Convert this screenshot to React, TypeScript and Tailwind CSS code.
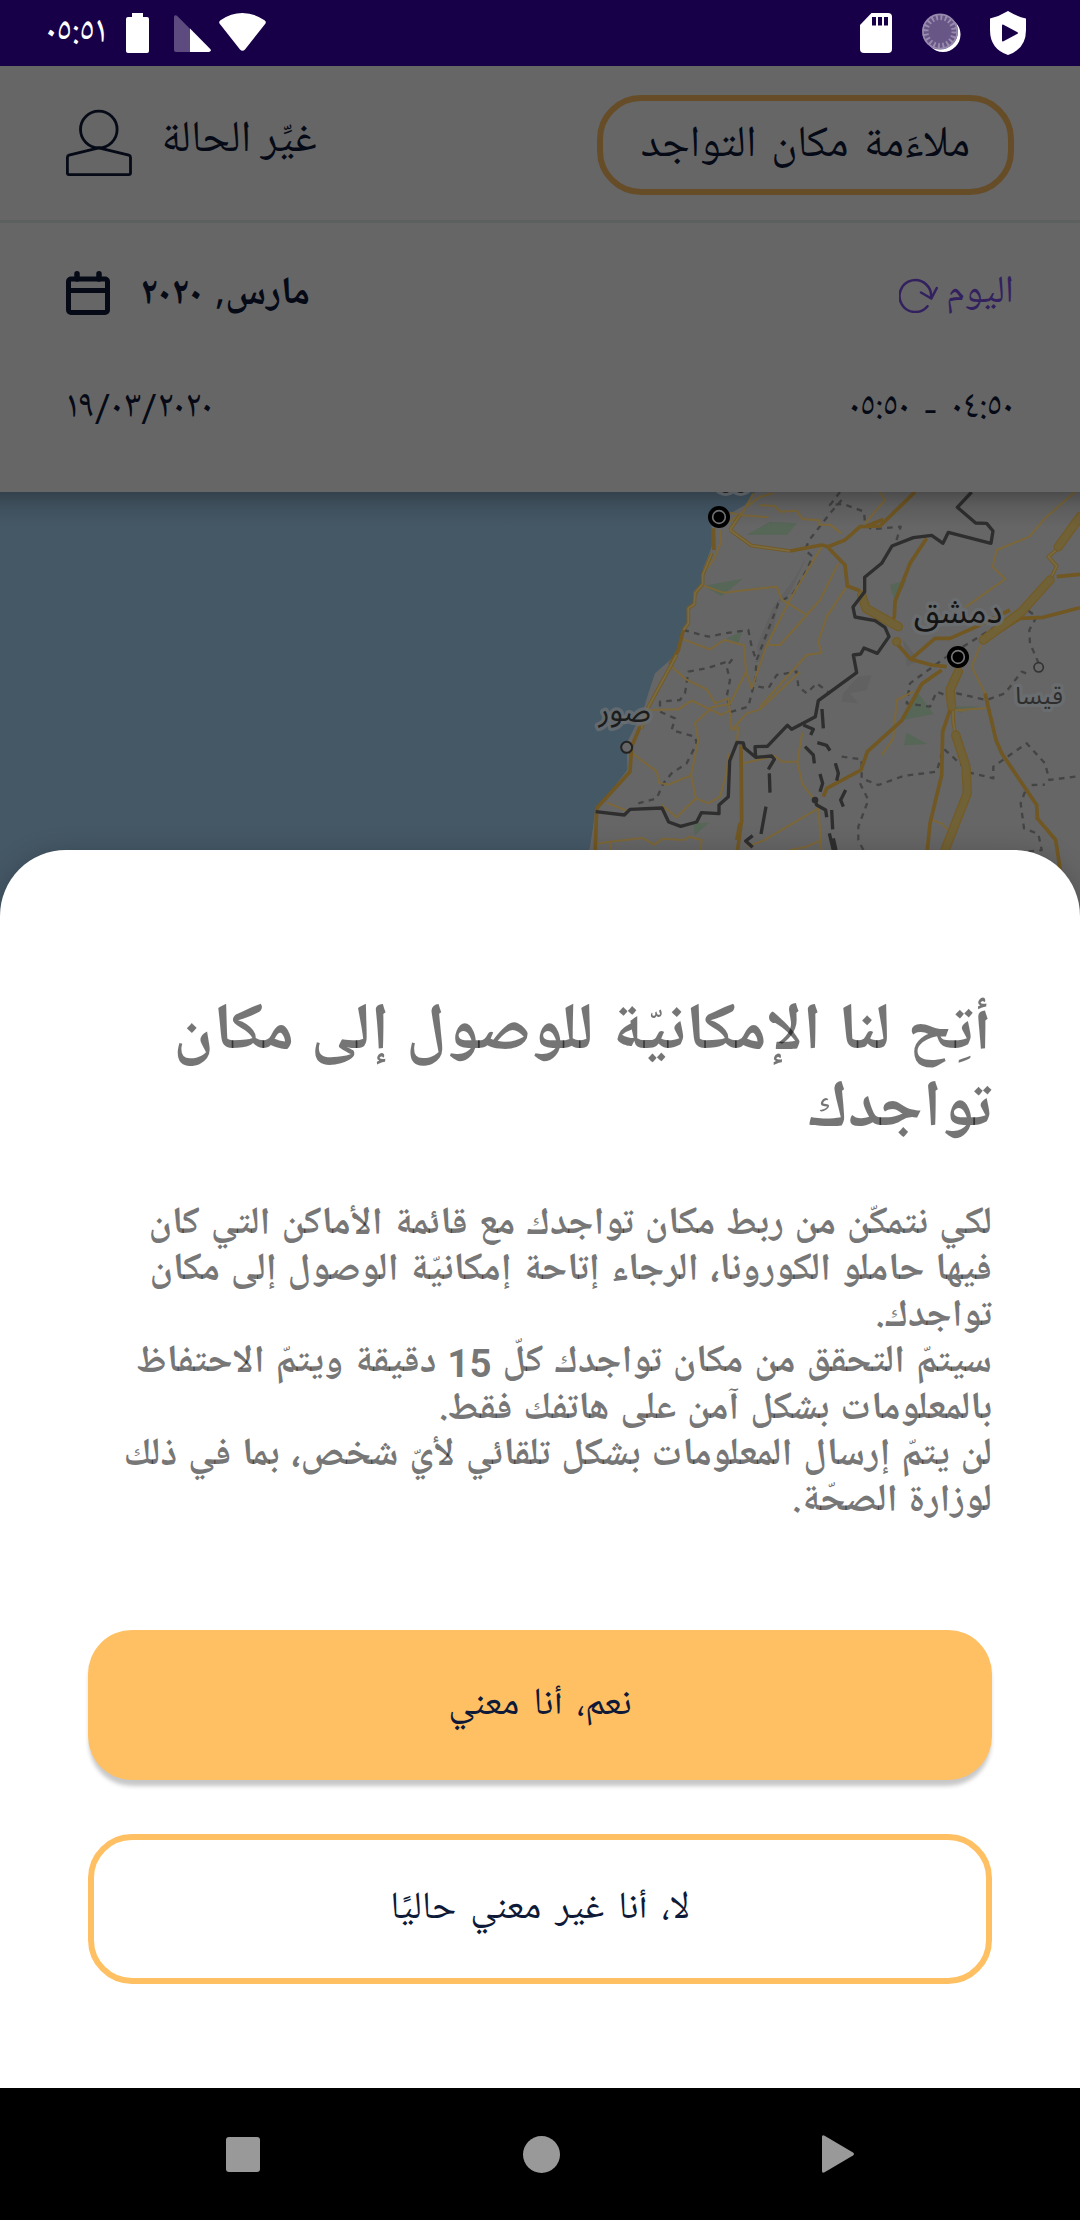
import React from "react";

const NASKH = "font-['Noto_Naskh_Arabic_UI','Noto_Naskh_Arabic',Roboto,serif]";

function StatusBar() {
  return (
    <div className="flex h-[66px] items-start bg-[#180049] text-white" dir="ltr">
      <span className="ml-[45px] w-[81px] whitespace-nowrap text-[38.5px] leading-[64px]">٠٥:٥١</span>
      <svg className="mt-[13px] h-[40px] w-[23px]" viewBox="0 0 23 40" fill="#fff">
        <path d="M6 0h11v4h4a2 2 0 0 1 2 2v32a2 2 0 0 1-2 2H2a2 2 0 0 1-2-2V6a2 2 0 0 1 2-2h4z" />
      </svg>
      <svg className="ml-[25px] mt-[15px] h-[37px] w-[37px]" viewBox="0 0 37 37">
        <path d="M0 1.5Q1-.5 3 .8L16.200 14V37H2a2 2 0 0 1-2-2z" fill="#5d4b80" />
        <path d="M16 13.500 36.500 34.200Q37.500 36.500 35 37H16z" fill="#fff" />
      </svg>
      <svg className="ml-[8px] mt-[13px] h-[38px] w-[47px]" viewBox="0 0 47 38" fill="#fff">
        <path d="M.5 10.500Q-.5 8.500 1.500 7.200Q12 0 23.500 0T45.500 7.200Q47.500 8.500 46.500 10.500L26 36.500Q23.500 39 21 36.500z" />
      </svg>
      <span className="grow" />
      <svg className="mt-[13px] h-[40px] w-[32px]" viewBox="0 0 32 40">
        <path d="M11.500 0H28a4 4 0 0 1 4 4v32a4 4 0 0 1-4 4H4a4 4 0 0 1-4-4V12z" fill="#fff" />
        <path d="M12 4h4v8.500h-4zM18 4h4v8.500h-4zM24 4h4v8.500h-4z" fill="#180049" />
      </svg>
      <svg className="ml-[30px] mt-[13px] h-[40px] w-[40px]" viewBox="0 0 40 40">
        <circle cx="21" cy="21.500" r="17.500" fill="#fff" />
        <circle cx="18" cy="18.500" r="18" fill="#685687" />
        <circle cx="18" cy="18.500" r="14.500" fill="none" stroke="#988bad" strokeWidth="6" strokeDasharray="2 2.555" />
        <circle cx="18" cy="18.500" r="17" fill="none" stroke="#988bad" strokeWidth="1.500" />
      </svg>
      <svg className="ml-[28px] mr-[54px] mt-[11px] h-[44px] w-[36px]" viewBox="0 0 36 44">
        <path d="M18 0Q27 5.500 36 7.500V19Q36 38 18 44Q0 38 0 19V7.500Q9 5.500 18 0z" fill="#fff" />
        <path d="M12 14.500Q12 13 13.500 13.700L27.500 21.200Q28.500 22 27.500 22.800L13.500 30.300Q12 30.800 12 29.500z" fill="#180049" />
      </svg>
    </div>
  );
}

function TopActions() {
  return (
    <div className="flex h-[157px] items-start justify-between border-b-[3px] border-[#5c605f] px-[66px] text-[44px]" dir="ltr">
      <div className="flex items-start gap-[29px]">
        <svg className="mt-[43px] h-[68px] w-[66px]" viewBox="0 0 66 68" fill="none" stroke="#050a16" strokeWidth="2.800" strokeLinejoin="round">
          <circle cx="32.800" cy="20.500" r="18.300" />
          <path d="M32.800 38.800 3 46.200Q1.400 46.700 1.400 48.500V64Q1.400 65.600 3 65.600H62.600Q64.500 65.600 64.500 64V48.500Q64.500 46.700 62.800 46.200z" />
        </svg>
        <span className="mt-[44px] whitespace-nowrap leading-[60px]" dir="rtl">غيِّر الحالة</span>
      </div>
      <div className="mt-[29px] flex h-[100px] w-[417px] items-center justify-center whitespace-nowrap rounded-[44px] border-[6px] border-[#664d28] [word-spacing:5.2px]" dir="rtl">
        ملاءَمة مكان التواجد
      </div>
    </div>
  );
}

function DatePanel() {
  return (
    <div className="flex h-[269px] flex-col gap-[63px] px-[66px] pt-[46px] text-[38.5px] leading-[50px]">
      <div className="flex h-[50px] items-start justify-between" dir="ltr">
        <div className="flex items-start gap-[30px]">
          <svg className="mt-[2px] h-[44px] w-[44px]" viewBox="0 0 44 44" fill="none" stroke="#050a16">
            <rect x="2.500" y="8" width="39" height="33.500" rx="2.500" strokeWidth="5" />
            <path d="M2.500 19.500h39" strokeWidth="5" />
            <path d="M11 2.800V8M33 2.800V8" strokeWidth="5.500" strokeLinecap="round" />
          </svg>
          <span className="whitespace-nowrap font-bold [word-spacing:4px]" dir="rtl">مارس, ٢٠٢٠</span>
        </div>
        <div className="flex items-start gap-[8px] text-[#33215f]">
          <svg className="mt-[9px] h-[35px] w-[39px]" viewBox="0 0 39 35" fill="none" stroke="currentColor" strokeWidth="2.500" strokeLinecap="round" strokeLinejoin="round">
            <path d="M28.500 28.200A15.800 16 0 1 1 32 20" />
            <path d="M22 14.500 32.300 20.500 37.800 10" />
          </svg>
          <span className="-mt-[2px] whitespace-nowrap" dir="rtl">اليوم</span>
        </div>
      </div>
      <div className="flex h-[50px] items-start justify-between" dir="ltr">
        <span className="whitespace-nowrap">
          ١٩<span className="font-[Roboto] leading-none">/</span>٠٣<span className="font-[Roboto] leading-none">/</span>٢٠٢٠
        </span>
        <span className="whitespace-nowrap [word-spacing:6px]" dir="rtl">٠٤:٥٠ - ٠٥:٥٠</span>
      </div>
    </div>
  );
}

const minorRoads = [
  "M580 40 550 95 510 125M510 98 540 105 625 112M600 75 645 78 660 95 710 92 727 117 778 121 778 134 810 134 845 160",
  "M640 40 600 50 560 80M960 36 975 60 915 130",
  "M425 315 490 338 650 320 665 358 740 405M785 200 695 350 620 495M835 250 780 360 740 405 660 495 625 495",
  "M860 320 800 410 775 485 785 518 740 525 600 680",
  "M370 478 450 508 492 480 552 496 558 575 575 625 620 495M558 575 510 672 455 682 405 730 415 780 393 885 408 955 445 970 480 950 500 880 505 820",
  "M335 560 378 598 440 628 465 670 505 655 515 750 560 700 600 688 720 575M270 690 355 688 395 662 485 705 510 690",
  "M515 750 535 742 530 785M220 822 290 875 298 908 325 914 393 886M408 955 350 1012 305 975M140 968 200 992",
  "M105 1092 150 1085 248 1074 282 1094 310 1076 372 1080 388 1070 425 1080 420 1130M150 1085 155 1130",
  "M550 850 645 828 665 845 712 845 727 757M712 845 727 912 775 975 785 1130M775 985 610 1082 560 1100M690 1110 740 1100 785 1080",
  "M1545 36 1455 115 1408 170 1310 210 1298 260 1336 297 1215 382",
  "M1262 495 1235 560 1280 650M1185 690 1280 685M1175 690 1215 692M1060 635 1010 660 1000 775 965 825M1115 1020 1145 1030 1165 1050",
  "M480 150 482 190 460 240 430 280",
];
const majorRoads = [
  "M690 213 785 195 805 200 855 180 900 140 960 138 1065 36M920 138 970 118",
  "M800 198 855 255 862 318 900 332M1010 490 1052 538 1115 555 1160 560M1052 538 1125 475 1170 475 1250 440 1350 390",
  "M1100 175 1050 250 1005 365 1003 410 995 425M1560 383 1450 412 1380 415 1270 485M1490 290 1560 283",
  "M1145 570 1085 612 1025 722 922 815 903 870 800 925 790 950M1170 690 1148 755 1145 885 1110 1030 1100 1130",
  "M1275 640 1308 780 1325 820 1430 975 1432 1015 1487 1080 1500 1165 1515 1284M543 795 545 1020 530 1130",
  "M370 450 355 510 330 555M240 740 215 800 210 875 110 985 105 1130M460 145 462 210M530 1080 540 1030",
];
const highways = [
  "M905 345 918 385 1015 440M1560 110 1495 200M1470 300 1385 395 1270 480M1195 575 1170 630 1175 680M1187 765 1218 860 1222 940 1155 1110",
];
const coastRoads = "M510 150 575 197 690 213M540 105 510 150M455 220 428 285 428 312 405 340 403 372 385 385 385 430 370 450M350 525 260 690 245 745M1495 205 1465 230 1490 258 1470 300M1178 680 1180 730 1187 765";
const railways = [
  "M840 36 810 75 850 72 885 85 912 95 915 130 935 148 1022 140 1005 195",
  "M845 60 810 100 748 180 735 210 758 230 740 270 700 340 655 370 590 540 585 600 565 680 515 695 500 650 510 600 500 560 515 540 440 565 385 575 375 640 360 660 300 665 300 695 345 715 335 750 405 770 410 790 380 850 335 880 310 910 290 955 235 970",
  "M370 450 445 470 495 460 565 450 575 500 590 545M595 620 625 625 650 585 710 575 715 620 740 640 770 610 810 640",
  "M1436 550 1410 490 1408 450 1430 410 1395 385 1290 450 1160 530 1050 610 1040 670 1110 680 1130 635 1180 655 1190 640 1280 660 1335 640 1385 575 1410 585",
  "M845 830 905 838 905 895 955 915 1030 888 1130 875 1150 805 1230 878 1300 895 1300 860 1400 790 1455 850 1468 900 1560 888",
  "M900 910 925 960 895 1040 895 1080 910 1110M1415 915 1455 914M1395 935 1382 970 1392 1045 1435 1062 1445 1110 1400 1115",
];
const border =
  "M1235 36 1192 82 1247 129 1280 130 1299 153 1293 190 1165 157 1149 190 1115 166 1060 173 996 198 965 250 914 292 914 335 879 381 885 411 945 422 975 442 987 470 952 520 912 504 902 522 880 525 890 578 775 662 766 710 695 748 682 736 622 799 585 800 587 832 553 803 550 789 531 787 509 843 505 950 477 975 477 1001 424 998 410 1026 362 1039 326 1026 306 984 210 988 193 1005 107 995";
const armistice = [
  "M587 832 635 828 643 838 625 868M628 880 630 938M618 980 603 1062M578 1067 557 1083 578 1102",
  "M786 687 790 745M730 735 760 748 752 765M735 800 760 825 763 850M772 788 800 796 810 812M826 850 835 880 830 902M780 882 788 910 780 935M857 930 842 960 850 980M765 960 770 975 797 990 800 1012M815 990 818 1048M808 1060 820 1110M820 1075 828 1110",
];

function Label({ x, y, size, fill, children }: { x: number; y: number; size: number; fill: string; children: string }) {
  return (
    <text x={x} y={y} fontSize={size} textAnchor="middle" fill={fill} stroke="#6c7073" strokeOpacity="0.75" strokeWidth="20" strokeLinejoin="round" paintOrder="stroke" className="font-['Noto_Sans_Arabic',sans-serif]">
      {children}
    </text>
  );
}

function Capital({ x, y }: { x: number; y: number }) {
  return (
    <g>
      <circle cx={x} cy={y} r="33" fill="#000" />
      <circle cx={x} cy={y} r="19" fill="none" stroke="#777" strokeWidth="5" />
    </g>
  );
}

function MapView() {
  return (
    <svg className="block h-[428px] w-full" viewBox="-1680 36 3240 1284" fill="none" strokeLinejoin="round">
      <defs>
        <linearGradient id="headerShade" x1="0" y1="0" x2="0" y2="1">
          <stop offset="0" stopColor="#000" stopOpacity="0.26" />
          <stop offset="0.4" stopColor="#000" stopOpacity="0.1" />
          <stop offset="1" stopColor="#000" stopOpacity="0" />
        </linearGradient>
      </defs>
      <rect x="-1680" y="36" width="3240" height="1284" fill="#455866" />
      <path d="M585 36 555 75 520 95 455 130 455 200 428 270 424 310 400 335 400 370 380 385 385 430 370 450 358 510 330 540 285 580 265 640 250 690 200 790 202 870 155 930 105 990 98 1050 88 1110V1320H1560V36z" fill="#666" />
      <path d="M740 230 690 340 655 370 640 450 600 550 590 500 640 380 700 300zM850 640 895 590 935 585 920 630 870 640 895 670 845 665zM1030 480 1075 540 1040 560z" fill="#616161" />
      <path d="M560 164 630 125 712 130 680 165zM430 318 548 296 485 348zM500 475 545 455 535 488zM990 315 1040 300 1005 370zM1075 640 1120 702 1028 720zM1040 758 1103 792 1032 796zM400 1030 447 1028 405 1065zM1180 680 1255 680 1200 698z" fill="#566657" />
      {railways.map((d) => <path key={d} d={d} stroke="#444" strokeWidth="7" strokeDasharray="17 16" />)}
      {minorRoads.map((d) => <path key={d} d={d} stroke="#7c6738" strokeWidth="6" />)}
      {majorRoads.map((d) => <path key={d} d={d} stroke="#715722" strokeWidth="11" />)}
      <path d={coastRoads} stroke="#735b26" strokeWidth="11" />
      <path d={coastRoads} stroke="#7b6b42" strokeWidth="5" />
      {highways.map((d) => (
        <g key={d} strokeLinecap="round">
          <path d={d} stroke="#735b26" strokeWidth="28" />
          <path d={d} stroke="#716136" strokeWidth="21" />
        </g>
      ))}
      <circle cx="1010" cy="485" r="12" fill="#716136" stroke="#735b26" strokeWidth="4" />
      <path d={border} stroke="#2e2e2e" strokeWidth="10" />
      {armistice.map((d) => <path key={d} d={d} stroke="#2e2e2e" strokeWidth="10" />)}
      <circle cx="765" cy="960" r="10" fill="#2e2e2e" />
      <ellipse cx="497" cy="26" rx="32" ry="22" fill="#70787e" />
      <ellipse cx="542" cy="26" rx="32" ry="22" fill="#70787e" />
      <ellipse cx="497" cy="32" rx="11" ry="7" fill="#202020" />
      <ellipse cx="542" cy="32" rx="11" ry="7" fill="#202020" />
      <Capital x={477} y={111} />
      <Capital x={1194} y={531} />
      <circle cx="200" cy="802" r="16.500" fill="#666" stroke="#222" strokeWidth="6" />
      <circle cx="1436" cy="562" r="14" fill="#666" stroke="#333" strokeWidth="5" />
      <Label x={1194} y={429} size={100} fill="#141414">دمشق</Label>
      <Label x={194} y={722} size={90} fill="#1c1c1c">صور</Label>
      <Label x={1437} y={672} size={73} fill="#2e2e2e">قيسا</Label>
      <rect x="-1680" y="36" width="3240" height="105" fill="url(#headerShade)" />
    </svg>
  );
}

function PermissionSheet() {
  return (
    <div className="relative -mt-[70px] h-[1238px] rounded-t-[66px] bg-white px-[88px] pt-[144px] shadow-[0_6px_30px_rgba(0,0,0,0.24)]">
      <h1 className="whitespace-nowrap text-[66px] font-bold leading-[77px] text-black/54 [word-spacing:2px]">
        أتِح لنا الإمكانيّة للوصول إلى مكان
        <br />
        تواجدك
      </h1>
      <p className="mt-[53px] h-[323px] whitespace-nowrap text-[38.5px] font-bold leading-[46.15px] text-black/54 [word-spacing:2.4px]">
        لكي نتمكّن من ربط مكان تواجدك مع قائمة الأماكن التي كان
        <br />
        فيها حاملو الكورونا، الرجاء إتاحة إمكانيّة الوصول إلى مكان
        <br />
        تواجدك.
        <br />
        سيتمّ التحقق من مكان تواجدك كلّ <span className="font-[Roboto] leading-none">15</span> دقيقة ويتمّ الاحتفاظ
        <br />
        بالمعلومات بشكل آمن على هاتفك فقط.
        <br />
        لن يتمّ إرسال المعلومات بشكل تلقائي لأيّ شخص، بما في ذلك
        <br />
        لوزارة الصحّة.
      </p>
      <button className="mt-[106px] flex h-[150px] w-full items-center justify-center rounded-[44px] bg-[#ffc064] text-[38.5px] text-[#0f1a38] shadow-[0_7px_4px_-1px_rgba(0,0,0,0.22)] [word-spacing:5.5px]">
        نعم، أنا معني
      </button>
      <button className="mt-[54px] flex h-[150px] w-full items-center justify-center rounded-[44px] border-[6px] border-[#ffc064] text-[38.5px] text-[#0f1a38] [word-spacing:5.5px]">
        لا، أنا غير معني حاليًا
      </button>
    </div>
  );
}

function NavBar() {
  return (
    <div className="relative flex h-[132px] items-center justify-between bg-black px-[226px]" dir="ltr">
      <div className="h-[35px] w-[34px] rounded-[3px] bg-[#999]" />
      <div className="size-[37px] rounded-full bg-[#999]" />
      <svg className="h-[38px] w-[32px]" viewBox="0 0 32 38" fill="#999">
        <path d="M0 2Q0-.6 2.600.800L31 17.500Q33 19 31 20.500L2.600 37.200Q0 38.600 0 36z" />
      </svg>
    </div>
  );
}

export default function App() {
  return (
    <div className={`h-[2220px] w-[1080px] overflow-hidden bg-[#666] text-[#050a16] ${NASKH}`} dir="rtl">
      <StatusBar />
      <TopActions />
      <DatePanel />
      <MapView />
      <PermissionSheet />
      <NavBar />
    </div>
  );
}
